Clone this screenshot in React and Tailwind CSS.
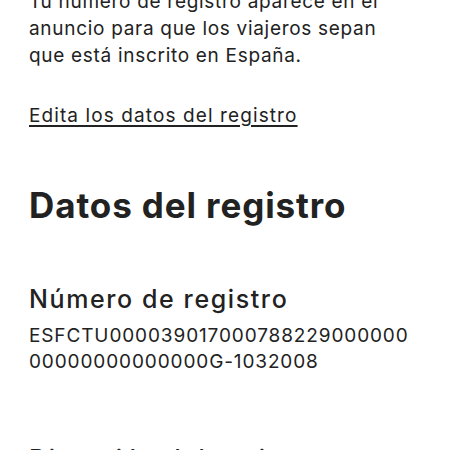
export default function App() {
  return (
    <div className="w-[450px] h-[450px] overflow-hidden bg-white text-[#222222] font-['Inter','Noto_Sans',sans-serif]">
      <div className="px-[29px] mt-[-12.5px] flex flex-col">
        <p className="text-[19px] leading-[27px] tracking-[0.7px] whitespace-nowrap">
          Tu número de registro aparece en el
          <br />
          anuncio para que los viajeros sepan
          <br />
          que está inscrito en España.
        </p>
        <a className="mt-[33px] text-[19px] leading-[27px] tracking-[1.1px] underline underline-offset-[3px] decoration-[1.5px] self-start whitespace-nowrap">
          Edita los datos del registro
        </a>
        <h1 className="mt-[56px] text-[35px] leading-[40px] tracking-[0.9px] font-bold whitespace-nowrap">
          Datos del registro
        </h1>
        <h2 className="mt-[59px] text-[25px] leading-[30px] tracking-[1.6px] font-medium whitespace-nowrap">
          Número de registro
        </h2>
        <p className="mt-[9px] text-[19px] leading-[26px] tracking-[0.88px] whitespace-nowrap">
          ESFCTU000039017000788229000000
          <br />
          00000000000000G-1032008
        </p>
        <h2 className="mt-[69px] text-[25px] leading-[30px] tracking-[1.6px] font-medium whitespace-nowrap">
          Dirección del registro
        </h2>
      </div>
    </div>
  );
}
